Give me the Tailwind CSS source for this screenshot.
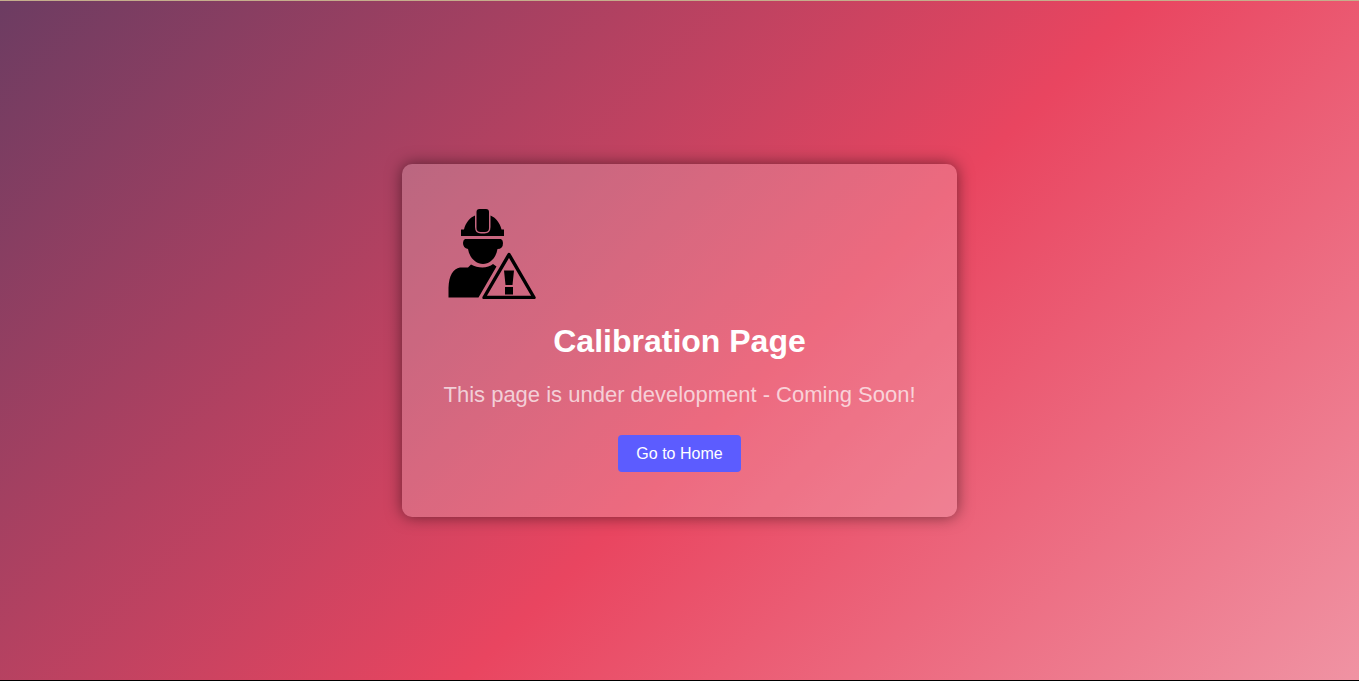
<!DOCTYPE html>
<html lang="en">
<head>
<meta charset="utf-8">
<meta name="viewport" content="width=device-width, initial-scale=1">
<title>Calibration Page</title>
<script src="https://cdn.jsdelivr.net/npm/@tailwindcss/browser@4"></script>
</head>
<body class="flex min-h-screen items-center justify-center border-t border-b border-t-[#c5ae8c] border-b-black bg-[linear-gradient(135deg,#6c3c62_0%,#e94560_56%,#f093a3_100%)] bg-no-repeat font-['Liberation_Sans',Arial,sans-serif]">
<main class="flex flex-col items-center rounded-[10px] bg-white/20 px-[41px] py-[45px] text-center shadow-[0_0_16px_rgba(0,0,0,0.5)]">
  <svg class="h-[90px] w-[98px] self-start" viewBox="-4 0 98 90" role="img" aria-label="Construction worker with warning sign">
    <path d="M14 27V20.500H17C18.500 14 23 8.500 28 6.500V18Q28 24.500 34 24.500H37.500Q43.500 24.500 43.500 18V6.500C48.500 8.500 53 14 54.500 20.500H57V27Z"/>
    <path d="M32.500 0H39Q42 0 42 3V19Q42 23 38 23H33.500Q29.500 23 29.500 19V3Q29.500 0 32.500 0Z"/>
    <path d="M18 30H54Q56 31 56 34Q56 40 50.500 40C49 49 43 55 36 55S22.500 49 21 40Q16 39 16 34Q16 31 18 30Z"/>
    <path d="M1.500 88.500V79C2 66 6 60 13 58.500H21L24 55.500C31 59.500 41 59.500 46 55L49.500 57.500L31.500 88.500Z"/>
    <path d="M62 45.500L87 88.500H37Z" fill="none" stroke="#000" stroke-width="3.400" stroke-linejoin="round"/>
    <path d="M57 61.500H67L65.500 76H58.500ZM58 78H66V85.500H58Z"/>
  </svg>
  <h1 class="mt-6 text-[32px] leading-9 font-bold text-white">Calibration Page</h1>
  <p class="mt-5 text-[22px] leading-8 text-white/70">This page is under development - Coming Soon!</p>
  <button type="button" class="mt-6 h-[37px] cursor-pointer rounded bg-[#5c5cff] px-[18px] text-base text-white">Go to Home</button>
</main>
</body>
</html>
